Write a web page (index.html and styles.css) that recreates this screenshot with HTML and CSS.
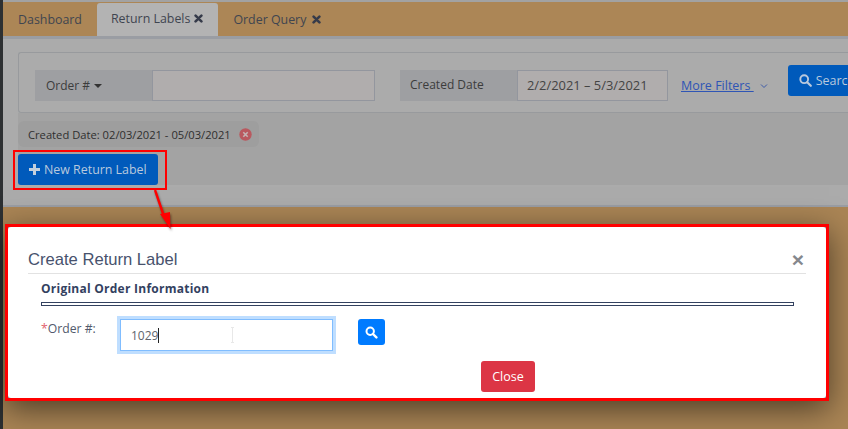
FILE: index.html
```html
<!DOCTYPE html>
<html lang="en">
<head>
  <meta charset="UTF-8">
  <title>Return Labels</title>
  <link rel="stylesheet" href="styles.css">
</head>
<body>
  <div class="page">
    <div class="tabs">
      <a class="tab">Dashboard</a>
      <a class="tab active">Return Labels
        <svg class="tab-x" width="9" height="9" viewBox="0 0 9 9"><path d="M1.6 1.6l5.8 5.8M7.4 1.6L1.6 7.4" stroke="#363b4a" stroke-width="2.6" stroke-linecap="round"/></svg>
      </a>
      <a class="tab">Order Query
        <svg class="tab-x" width="9" height="9" viewBox="0 0 9 9"><path d="M1.6 1.6l5.8 5.8M7.4 1.6L1.6 7.4" stroke="#363b4a" stroke-width="2.6" stroke-linecap="round"/></svg>
      </a>
    </div>

    <div class="panel">
      <div class="filters">
        <div class="filter-label order-label">Order # <span class="caret"></span></div>
        <input class="filter-input order-input" type="text">
        <div class="filter-label date-label">Created Date</div>
        <div class="filter-input date-input">2/2/2021 – 5/3/2021</div>
        <a class="more-filters">More Filters&nbsp;</a>
        <svg class="chevron" width="8" height="6" viewBox="0 0 8 6"><path d="M1 1.5l3 3 3-3" fill="none" stroke="#3d5aa8" stroke-width="1"/></svg>
        <button class="search-btn">
          <svg width="13" height="13" viewBox="0 0 13 13"><circle cx="5.2" cy="5.2" r="3.9" fill="none" stroke="#b9c9dd" stroke-width="1.9"/><path d="M8.2 8.2l3.6 3.6" stroke="#b9c9dd" stroke-width="2.2" stroke-linecap="round"/></svg>
          Search
        </button>
      </div>
      <div class="results">
        <span class="chip">Created Date: 02/03/2021 - 05/03/2021
          <svg class="chip-x" width="13" height="13" viewBox="0 0 13 13"><circle cx="6.5" cy="6.5" r="6.2" fill="#b9595f"/><path d="M4.3 4.3l4.4 4.4M8.7 4.3l-4.4 4.4" stroke="#c4b4b4" stroke-width="1.6"/></svg>
        </span>
        <div class="new-frame">
          <button class="new-btn"><span class="plus"></span>New Return Label</button>
        </div>
      </div>
    </div>
  </div>

  <div class="modal-frame">
    <div class="modal">
      <div class="modal-head">
        <h2>Create Return Label</h2>
        <span class="modal-x">&times;</span>
      </div>
      <div class="section">
        <h3>Original Order Information</h3>
        <div class="rule"></div>
        <div class="form-row">
          <label class="form-label"><span class="req">*</span>Order #:</label>
          <div class="focus-input">1029<span class="cursor"></span><span class="ibeam"></span></div>
          <button class="find-btn">
            <svg width="13" height="13" viewBox="0 0 13 13"><circle cx="5.2" cy="5.2" r="3.7" fill="none" stroke="#fff" stroke-width="2"/><path d="M8 8l3.4 3.4" stroke="#fff" stroke-width="2.4" stroke-linecap="round"/></svg>
          </button>
        </div>
      </div>
      <div class="modal-foot">
        <button class="close-btn">Close</button>
      </div>
    </div>
  </div>

  <!-- annotation arrow from the button to the dialog -->
  <svg class="arrow" width="30" height="50" viewBox="0 0 30 50">
    <path d="M6 2l8.5 25" stroke="#f00" stroke-width="2.4" fill="none"/>
    <path d="M11 26l10-2 .5 17z" fill="#f00"/>
  </svg>
</body>
</html>
```

FILE: styles.css
```css
html, body {
  margin: 0;
  height: 429px;
  overflow: hidden;
}

body {
  position: relative;
  width: 848px;
  font-family: 'Open Sans', 'Noto Sans', sans-serif;
  font-size: 12px;
  background: linear-gradient(#2d3032, #2d3032) left / 3px 100% no-repeat, #aa8555;
  color: #3a3f4a;
}

.page {
  margin-left: 3px;
  border-top: 2px solid #a2a2a2;
}

.tabs {
  display: flex;
  height: 34px;
  background: #ac8656;
}

.tab {
  display: flex;
  align-items: center;
  gap: 6px;
  padding: 0 15px;
  color: #3f4550;
  font-size: 12.4px;
}

.tab.active {
  gap: 4px;
  margin-top: 1px;
  padding: 0 15px 2px 14px;
  background: #b3b3b3;
  border-radius: 3px 3px 0 0;
}

.tab-x {
  flex-shrink: 0;
}

.panel {
  height: 171px;
  box-sizing: border-box;
  padding-top: 13px;
  background: #ababab;
  border-top: 3px solid #9a9da3;
  border-bottom: 2px solid #9a9da3;
}

.filters {
  display: flex;
  align-items: center;
  height: 61px;
  box-sizing: border-box;
  margin-left: 15px;
  padding: 17px 0 11px 16px;
  border: 1px solid #989a9d;
  border-right: 0;
  border-radius: 3px 0 0 3px;
}

.filter-label {
  display: flex;
  align-items: center;
  flex-shrink: 0;
  width: 117px;
  height: 31px;
  box-sizing: border-box;
  background: #9e9fa2;
  color: #3c3c3c;
  font-size: 12px;
}

.order-label {
  padding-left: 11px;
  gap: 4px;
}

.caret {
  border: 4px solid transparent;
  border-top-color: #333;
  border-bottom: 0;
}

.filter-input {
  flex-shrink: 0;
  height: 31px;
  box-sizing: border-box;
  border: 1px solid #93969e;
  background: #b0adad;
}

.order-input {
  width: 223px;
  padding: 0;
  outline: none;
}

.date-label {
  margin-left: 25px;
  padding: 0 0 3px 10px;
}

.date-input {
  width: 151px;
  padding-left: 9px;
  line-height: 29px;
  color: #444;
  font-size: 12.9px;
  white-space: nowrap;
}

.more-filters {
  flex-shrink: 0;
  margin-left: 13px;
  color: #2f55b5;
  font-size: 12.5px;
  text-decoration: underline;
  white-space: nowrap;
}

.chevron {
  flex-shrink: 0;
  margin-left: 6px;
}

.search-btn {
  display: flex;
  align-items: center;
  flex-shrink: 0;
  gap: 4px;
  width: 90px;
  height: 31px;
  margin: -10px 0 0 20px;
  padding: 0 0 0 11px;
  border: 0;
  border-radius: 3px 0 0 3px;
  background: #005abb;
  color: #b9c9dd;
  font: 12.5px 'Open Sans', sans-serif;
}

.results {
  height: 72px;
  box-sizing: border-box;
  margin-left: 15px;
  padding-top: 8px;
  background: #a3a3a3;
}

.chip {
  display: inline-flex;
  align-items: center;
  gap: 8px;
  height: 26px;
  box-sizing: border-box;
  padding: 0 7px 0 10px;
  border-radius: 6px;
  background: #9e9e9e;
  color: #2f2f2f;
  font-size: 11.2px;
  white-space: nowrap;
  vertical-align: top;
}

.new-frame {
  width: 154px;
  box-sizing: border-box;
  margin: 3px 0 0 -5px;
  padding: 2px 7px 3px 3px;
  border: 2px solid #f00;
}

.new-btn {
  display: flex;
  align-items: center;
  gap: 4px;
  width: 140px;
  height: 31px;
  padding: 0 0 0 11px;
  border: 0;
  border-radius: 3px;
  background: #005abb;
  color: #b9c9dd;
  font: 12.4px 'Open Sans', sans-serif;
}

.plus {
  width: 11px;
  height: 11px;
  background:
    linear-gradient(#c3cfdd, #c3cfdd) center / 3px 11px no-repeat,
    linear-gradient(#c3cfdd, #c3cfdd) center / 11px 3px no-repeat;
}

.arrow {
  position: absolute;
  left: 149px;
  top: 188px;
  overflow: visible;
  filter: drop-shadow(1px 2px 1px rgba(0, 0, 0, .4));
}

.modal-frame {
  position: absolute;
  left: 5px;
  top: 224px;
  width: 824px;
  height: 177px;
  box-sizing: border-box;
  border: 3px solid #f00;
  background: #8a8a8a;
  box-shadow: 0 8px 30px rgba(0, 0, 0, .55);
}

.modal {
  height: 100%;
  box-sizing: border-box;
  padding: 0 20px;
  background: #fff;
  border-radius: 3px;
}

.modal-head {
  display: flex;
  justify-content: space-between;
  align-items: center;
  height: 47px;
  box-sizing: border-box;
  padding-top: 19px;
  border-bottom: 1px solid #e2e2e2;
}

.modal-head h2 {
  margin: 0;
  font: 400 16.6px 'Liberation Sans', Arial, sans-serif;
  color: #47526d;
}

.modal-x {
  margin-right: 2px;
  font: 700 21px/20px 'Liberation Sans', Arial, sans-serif;
  color: #85888d;
}

.section {
  padding: 0 12px 0 13px;
}

.section h3 {
  margin: 7px 0 0;
  font: 700 12px/16px 'Open Sans', sans-serif;
  color: #33415f;
  letter-spacing: .25px;
}

.rule {
  height: 4px;
  margin-top: 5px;
  box-sizing: border-box;
  border: 1px solid #33415f;
}

.form-row {
  display: flex;
  align-items: flex-start;
  margin-top: 13px;
}

.form-label {
  width: 79px;
  flex-shrink: 0;
  padding-top: 1px;
  color: #525a6c;
  font-size: 12.2px;
  line-height: 18px;
}

.req {
  color: #e2626e;
}

.focus-input {
  position: relative;
  width: 213px;
  height: 32px;
  box-sizing: border-box;
  padding-left: 10px;
  border: 1px solid #80bdff;
  box-shadow: 0 0 0 3px #bfdeff;
  color: #60656d;
  font-size: 12px;
  line-height: 31px;
}

.cursor {
  display: inline-block;
  width: 1px;
  height: 15px;
  background: #222;
  vertical-align: -3px;
}

.ibeam {
  position: absolute;
  left: 110px;
  top: 7px;
  width: 3px;
  height: 14px;
  border: 1px solid #e8e8e8;
  border-width: 1px 0;
  background: linear-gradient(#e8e8e8, #e8e8e8) center / 1px 100% no-repeat;
}

.find-btn {
  display: flex;
  align-items: center;
  justify-content: center;
  width: 27px;
  height: 26px;
  margin-left: 25px;
  padding: 0;
  border: 0;
  border-radius: 3px;
  background: #007bff;
}

.modal-foot {
  display: flex;
  justify-content: flex-end;
  margin-top: 10px;
  padding-right: 271px;
}

.close-btn {
  width: 54px;
  height: 31px;
  padding: 0;
  border: 0;
  border-radius: 3px;
  background: #dc3545;
  color: #fff;
  font: 12.5px 'Open Sans', sans-serif;
}
```
